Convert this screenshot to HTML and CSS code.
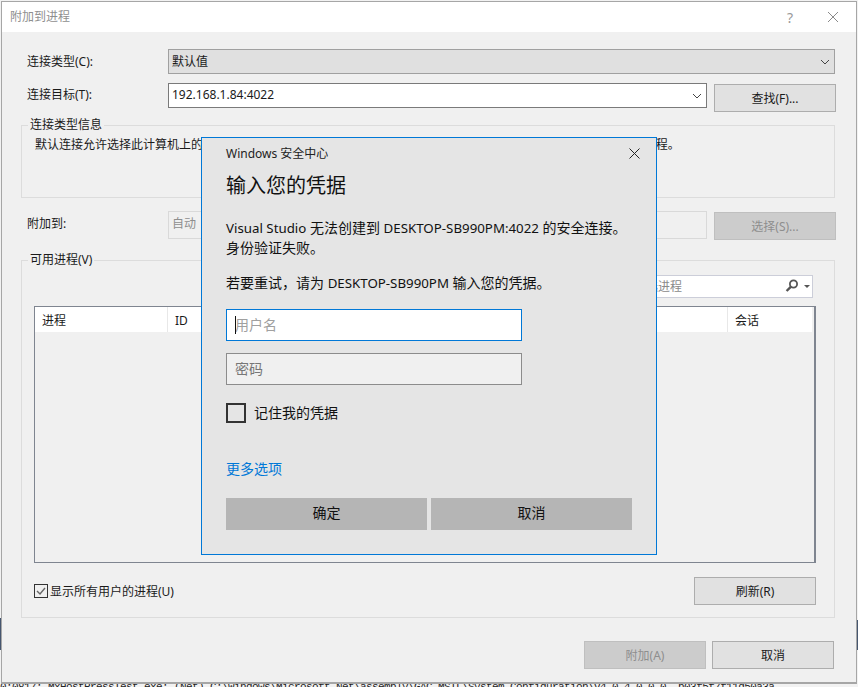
FILE: index.html
```html
<!DOCTYPE html>
<html lang="zh-CN">
<head>
<meta charset="utf-8">
<title>附加到进程</title>
<link rel="stylesheet" href="styles.css">
</head>
<body>
<div class="console">0:0817: MxHostPressTest.exe:  (Net)  C:\Windows\Microsoft.Net\assembly\GAC_MSIL\System.Configuration\v4.0_4.0.0.0__b03f5f7f11d50a3a</div>
<span class="edge edge-a"></span>
<span class="edge edge-b"></span>
<main class="window">
  <header class="titlebar">
    <span class="title">附加到进程</span>
    <span class="help">?</span>
    <svg class="close" width="12" height="12" viewBox="0 0 12 12"><path d="M1 1l10 10M11 1L1 11" stroke="#8a8a8a" fill="none"/></svg>
  </header>
  <div class="body">
    <div class="row row-type">
      <label class="label">连接类型(C):</label>
      <div class="field field-select">默认值
        <svg class="chev" width="10" height="6" viewBox="0 0 10 6"><path d="M1 1l4 4 4-4" stroke="#444" fill="none"/></svg>
      </div>
    </div>
    <div class="row row-target">
      <label class="label">连接目标(T):</label>
      <div class="field field-target">192.168.1.84:4022
        <svg class="chev" width="10" height="6" viewBox="0 0 10 6"><path d="M1 1l4 4 4-4" stroke="#444" fill="none"/></svg>
      </div>
      <button class="btn btn-find">查找(F)...</button>
    </div>
    <fieldset class="group group-info">
      <legend class="legend">连接类型信息</legend>
      <p class="info">默认连接允许选择此计算机上的进程，或者使用 Visual Studio 远程调试监视器 (MSVSMON) 连接到远程计算机上的进程。</p>
    </fieldset>
    <div class="row row-attach">
      <label class="label">附加到:</label>
      <div class="field field-auto">自动</div>
      <button class="btn btn-disabled">选择(S)...</button>
    </div>
    <fieldset class="group group-proc">
      <legend class="legend">可用进程(V)</legend>
      <div class="filter-row">
        <div class="filter">
          <span class="filter-text">筛选进程</span>
          <svg class="search" width="14" height="14" viewBox="0 0 14 14"><circle cx="8.5" cy="5" r="3.6" stroke="#555" stroke-width="1.8" fill="none"/><path d="M6 7.6L1.6 12" stroke="#555" stroke-width="2.4"/></svg>
          <span class="caret"></span>
        </div>
      </div>
      <div class="table">
        <div class="thead">
          <span class="th th-name">进程</span>
          <span class="th th-id">ID</span>
          <span class="th th-session">会话</span>
        </div>
      </div>
      <div class="proc-foot">
        <label class="check-label">
          <svg class="check" width="14" height="14" viewBox="0 0 14 14"><rect x=".5" y=".5" width="13" height="13" fill="#f0f0f0" stroke="#333"/><path d="M3 7l3 3 5-6" stroke="#666" stroke-width="1.4" fill="none"/></svg>
          显示所有用户的进程(U)
        </label>
        <button class="btn">刷新(R)</button>
      </div>
    </fieldset>
    <div class="actions">
      <button class="btn btn-disabled">附加(A)</button>
      <button class="btn">取消</button>
    </div>
  </div>
</main>
<section class="modal">
  <div class="modal-top">
    <span class="modal-app">Windows 安全中心</span>
    <svg class="modal-close" width="11" height="11" viewBox="0 0 11 11"><path d="M.5.5l10 10M10.500.5l-10 10" stroke="#222" fill="none"/></svg>
  </div>
  <h1 class="modal-title">输入您的凭据</h1>
  <p class="modal-text"><span class="latin">Visual Studio</span> 无法创建到 <span class="latin">DESKTOP-SB990PM:4022</span> 的安全连接。<br>身份验证失败。</p>
  <p class="modal-text modal-retry">若要重试，请为 <span class="latin">DESKTOP-SB990PM</span> 输入您的凭据。</p>
  <div class="cred cred-user"><span class="cursor"></span>用户名</div>
  <div class="cred cred-pass">密码</div>
  <label class="remember"><span class="box"></span>记住我的凭据</label>
  <a class="more">更多选项</a>
  <div class="modal-actions">
    <button class="modal-btn">确定</button>
    <button class="modal-btn">取消</button>
  </div>
</section>
</body>
</html>
```
FILE: styles.css
```css
* { box-sizing: border-box; }
html, body { margin: 0; height: 100%; }
body {
  position: relative;
  width: 858px;
  height: 687px;
  overflow: hidden;
  background: #f2f2f2;
  font-family: "Noto Sans", "Noto Sans CJK SC", sans-serif;
  font-size: 12px;
  color: #1a1a1a;
}
.console {
  position: absolute;
  left: 0;
  top: 681px;
  width: 858px;
  white-space: nowrap;
  overflow: hidden;
  font-family: "Liberation Mono", monospace;
  font-size: 11px;
  letter-spacing: -.6px;
  line-height: 13px;
  color: #222;
}
.edge { position: absolute; }
.edge-a { left: 0; top: 618px; width: 1px; height: 32px; background: #46566f; }
.edge-b { left: 857px; top: 620px; width: 1px; height: 30px; background: #46566f; }
.window {
  position: absolute;
  left: 1px;
  top: 1px;
  width: 856px;
  height: 683px;
  border: 1px solid #a6a6a6;
  border-bottom-width: 2px;
  background: #f0f0f0;
  display: flex;
  flex-direction: column;
}
.titlebar {
  height: 30px;
  flex: none;
  background: #fff;
  display: flex;
  align-items: center;
  padding: 0 17px 0 8px;
}
.title { color: #8f8f8f; flex: 1; line-height: 30px; }
.help { color: #999; font-size: 14px; margin-right: 34px; }
.body { flex: 1; padding: 17px 20px 0 19px; display: flex; flex-direction: column; }
.row { display: flex; align-items: flex-start; }
.label { width: 147px; padding-left: 6px; flex: none; line-height: 25px; }
.field {
  position: relative;
  border: 1px solid #a0a0a0;
  height: 25px;
  line-height: 24px;
  padding-left: 3px;
}
.chev { position: absolute; right: 4px; top: 9px; }
.row-type { height: 25px; }
.row-type .field-select { width: 667px; background: #e0e0e0; }
.row-target { margin-top: 9px; height: 29px; }
.row-target .label { line-height: 23px; }
.field-target { width: 539px; background: #fff; border-color: #7a7a7a; line-height: 21px; }
.btn {
  width: 122px;
  height: 28px;
  border: 1px solid #adadad;
  background: #e1e1e1;
  font: inherit;
  color: #1a1a1a;
  padding: 0;
}
.btn-find { margin-left: 7px; margin-top: 1px; }
.btn-disabled { background: #cccccc; border-color: #bfbfbf; color: #8e8e8e; }
.group {
  margin: 0;
  padding: 0;
  border: 1px solid #dcdcdc;
  min-width: 0;
  width: 814px;
}
.legend { margin-left: 6px; padding: 0 2px; line-height: 16px; }
.group-info { height: 81px; margin-top: 5px; }
.info { margin: 3px 0 0 13px; line-height: 17px; white-space: nowrap; }
.row-attach { margin-top: 13px; }
.field-auto {
  width: 539px;
  height: 28px;
  line-height: 24px;
  border: 1px solid #d9d9d9;
  color: #8e8e8e;
}
.row-attach .btn { margin-left: 7px; margin-top: 1px; }
.row-attach .label { line-height: 26px; }
.group-proc { margin-top: 12px; height: 366px; padding: 0 19px 0 12px; }
.group-proc .legend { margin-left: -6px; }
.filter-row { display: flex; justify-content: flex-end; padding-right: 2px; }
.filter {
  position: relative;
  width: 350px;
  height: 23px;
  margin-top: 7px;
  border: 1px solid #ccced9;
  background: #fff;
  line-height: 21px;
  color: #8a8a8a;
}
.filter-text { position: absolute; right: 130px; }
.search { position: absolute; right: 13px; top: 3px; }
.caret {
  position: absolute;
  right: 2px;
  top: 9px;
  border: 3px solid transparent;
  border-top: 3px solid #555;
  border-bottom: 0;
}
.table {
  height: 257px;
  margin-top: 8px;
  border: 1px solid #7f8590;
  border-right-width: 2px;
  width: 782px;
}
.thead {
  display: flex;
  height: 25px;
  background: #fff;
  line-height: 27px;
  margin-right: 2px;
}
.th { padding-left: 7px; border-right: 1px solid #e8e8e8; flex: none; }
.th-name { width: 133px; }
.th-id { width: 560px; }
.th-session { border-right: 0; flex: 1; }
.proc-foot {
  display: flex;
  justify-content: space-between;
  align-items: center;
  height: 28px;
  margin-top: 14px;
  width: 782px;
}
.check-label { display: flex; align-items: center; gap: 2px; }
.check { flex: none; }
.actions { display: flex; justify-content: flex-end; gap: 6px; margin-top: 23px; width: 813px; }
.modal {
  position: absolute;
  left: 201px;
  top: 137px;
  width: 456px;
  height: 418px;
  border: 1px solid #0078d7;
  background: #e5e5e5;
  padding: 0 24px;
  display: flex;
  flex-direction: column;
}
.modal-top { display: flex; justify-content: space-between; align-items: center; height: 30px; }
.modal-app { font-size: 12px; color: #222; }
.modal-close { margin-right: -8px; }
.modal-title { margin: 3px 0 0; font-size: 20px; font-weight: 400; line-height: 30px; color: #111; }
.modal-text { margin: 17px 0 0; font-size: 14px; line-height: 20px; color: #111; white-space: nowrap; }
.latin { font-size: 13.3px; }
.modal-retry { margin-top: 15px; }
.cred {
  width: 296px;
  height: 32px;
  font-size: 14px;
  line-height: 30px;
  padding-left: 8px;
  color: #777;
  position: relative;
}
.cred-user { margin-top: 16px; background: #fff; border: 1px solid #0078d7; color: #a0a0a0; }
.cred-pass { margin-top: 12px; background: #f0f0f0; border: 1px solid #8c8c8c; }
.cursor { position: absolute; left: 8px; top: 6px; width: 1px; height: 18px; background: #111; }
.remember { display: flex; align-items: center; gap: 8px; margin-top: 18px; font-size: 14px; line-height: 20px; color: #111; }
.box { width: 20px; height: 20px; border: 2px solid #333; flex: none; }
.more { margin-top: 36px; font-size: 14px; line-height: 20px; color: #0078d7; }
.modal-actions { display: flex; gap: 4px; margin-top: 19px; width: 406px; }
.modal-btn {
  flex: 1;
  height: 32px;
  border: 0;
  background: #b5b5b5;
  font: inherit;
  font-size: 14px;
  line-height: 30px;
  color: #111;
  padding: 0 0 2px;
}
```
